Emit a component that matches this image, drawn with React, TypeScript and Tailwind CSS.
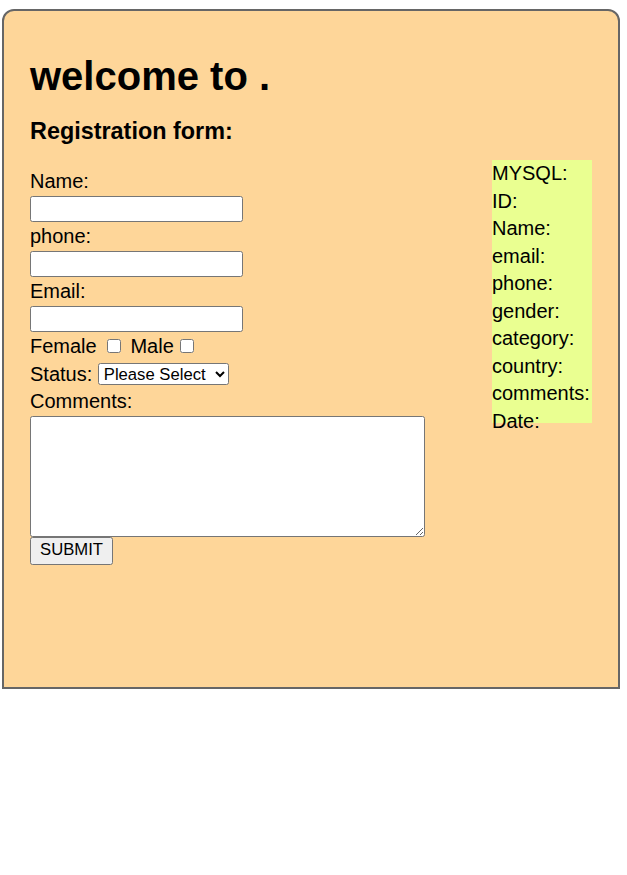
import { useState } from 'react'

const DB_FIELDS = ['MYSQL:', 'ID:', 'Name:', 'email:', 'phone:', 'gender:', 'category:', 'country:', 'comments:', 'Date:']

function TextField({ label }: { label: string }) {
  return (
    <>
      <div className="h-[27.5px] flex items-center">{label}</div>
      <div className="h-[27.5px] flex items-center">
        <input
          type="text"
          className="h-[26px] w-[213px] border border-[#767676] rounded-[2.5px] bg-white px-[2px] text-[16.67px]"
        />
      </div>
    </>
  )
}

export default function App() {
  const [status, setStatus] = useState('')

  return (
    <div className="font-['Liberation_Sans',Arial,sans-serif] text-black">
      <div className="ml-[2px] mt-[9px] w-[618px] h-[680px] border-2 border-[#666] rounded-t-[12px] bg-[#fed699] px-[26px] pt-[42px]">
        <h1 className="text-[40px] font-bold leading-[46px]">welcome to .</h1>
        <h3 className="mt-[18.5px] text-[23.4px] font-bold leading-[27px]">Registration form:</h3>

        <div className="mt-[15.5px] flex items-start justify-between">
          <form className="pt-[7.25px] text-[20px]" onSubmit={e => e.preventDefault()}>
            <TextField label="Name:" />
            <TextField label="phone:" />
            <TextField label="Email:" />

            <div className="h-[27.5px] flex items-center">
              <span>Female</span>
              <input type="checkbox" className="ml-[10.5px] mr-[3.75px] w-[14px] h-[14px]" />
              <span className="ml-[5.5px]">Male</span>
              <input type="checkbox" className="ml-[6px] w-[14px] h-[14px]" />
            </div>

            <div className="h-[27.5px] flex items-center">
              <span>Status:</span>
              <select
                value={status}
                onChange={e => setStatus(e.target.value)}
                className="ml-[5.5px] h-[22px] w-[131px] border border-[#767676] rounded-[2.5px] bg-white pl-[1px] text-[16.67px]"
              >
                <option value="">Please Select</option>
                <option value="single">Single</option>
                <option value="married">Married</option>
              </select>
            </div>

            <div className="h-[27.5px] flex items-center">Comments:</div>
            <textarea className="block mt-[1.25px] h-[121px] w-[395px] border border-[#767676] rounded-[2.5px] bg-white" />
            <button
              type="submit"
              className="block h-[27.5px] w-[83px] border border-[#767676] rounded-[2.5px] bg-[#efefef] text-[16.67px] leading-none"
            >
              SUBMIT
            </button>
          </form>

          <div className="h-[263px] w-[100px] bg-[#eaff91] text-[20px] leading-[27.5px]">
            {DB_FIELDS.map(f => (
              <div key={f}>{f}</div>
            ))}
          </div>
        </div>
      </div>
    </div>
  )
}
